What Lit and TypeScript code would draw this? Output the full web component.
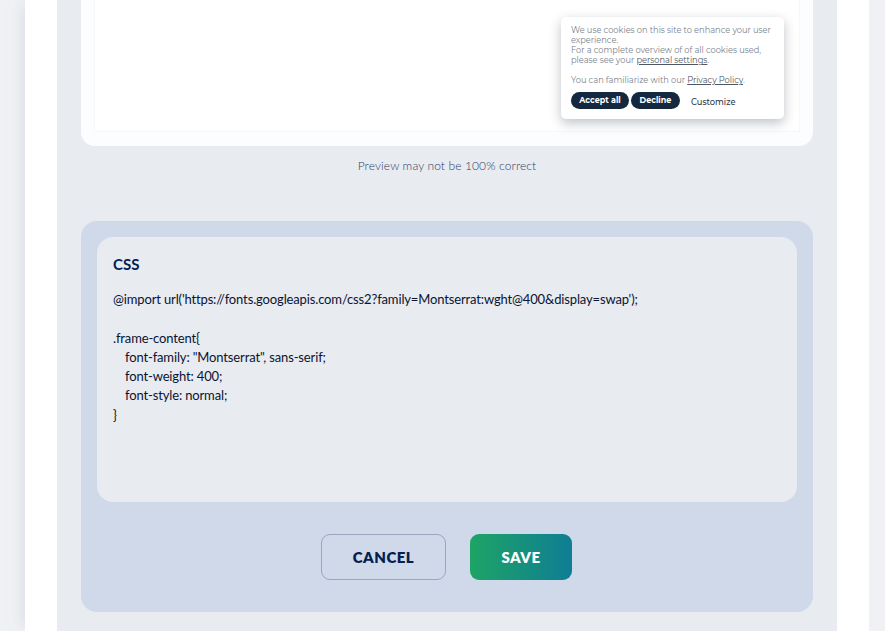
import { LitElement, html, css } from "lit";
import { customElement } from "lit/decorators.js";

@customElement("app-root")
export class AppRoot extends LitElement {
  static styles = css`
    :host { display: block; height: 631px; overflow: hidden; font-family: Lato, "Noto Sans", sans-serif; background: #eff1f4; }
    .page { height: 631px; margin: 0 16px 0 25px; padding: 0 32px; background: #fff; box-shadow: -8px 0 12px -6px rgba(200,206,214,.55); }
    .main { height: 631px; background: #e8ebf0; padding: 0 24px; display: flex; flex-direction: column; }
    .preview { height: 146px; flex: none; box-sizing: border-box; background: #fcfdfe; border-radius: 0 0 14px 14px; padding: 0 13px 14px; }
    .frame { position: relative; height: 132px; box-sizing: border-box; background: #fff; border: 1px solid #f6f7f9; border-top: 0; }
    .cookie { position: absolute; left: 466px; top: 17px; width: 223px; height: 102px; box-sizing: border-box; background: #fff; border-radius: 5px; padding: 8px 10px; box-shadow: 0 4px 12px rgba(40,50,70,.3); font-family: Montserrat, "Open Sans", sans-serif; font-size: 8.25px; line-height: 10px; color: #7b828c; }
    .cookie p { margin: 0 0 10px; white-space: nowrap; }
    .cookie a { color: #4d5663; text-decoration: underline; }
    .cbtns { display: flex; align-items: center; gap: 2px; margin-top: -3px; }
    .pill { height: 17px; line-height: 17px; border-radius: 9px; background: #14293f; color: #fff; font-weight: 700; font-size: 8px; text-align: center; }
    .accept { width: 58px; }
    .decline { width: 49px; }
    .custom { margin-left: 9px; color: #2e3a4a; font-weight: 500; font-size: 8.3px; line-height: 10px; padding-top: 2px; }
    .note { margin: 13px 0 0; height: 14px; line-height: 14px; text-align: center; font-size: 12px; font-weight: 300; letter-spacing: .12px; color: #2f3b68; }
    .panel { margin-top: 48px; height: 391px; flex: none; box-sizing: border-box; background: #cfd9e9; border-radius: 16px; padding: 16px; }
    .editor { height: 265px; box-sizing: border-box; background: #e8ebf0; border-radius: 16px; padding: 19px 16px; color: #0b1330; }
    .editor h3 { margin: 0 0 17.4px; font-size: 15px; line-height: 17px; font-weight: 700; color: #04204f; }
    .code { margin: 0; font-family: inherit; font-size: 13px; line-height: 19.2px; white-space: pre; letter-spacing: -.14px; }
    .ind { padding-left: 12px; }
    .actions { display: flex; justify-content: center; gap: 24px; margin-top: 32px; padding-right: 1px; }
    .btn { height: 46px; box-sizing: border-box; border-radius: 9px; display: flex; align-items: center; justify-content: center; font-size: 15px; font-weight: 800; letter-spacing: .5px; }
    .cancel { width: 125px; border: 1px solid #98a6be; color: #04204f; }
    .save { width: 102px; color: #fff; background: linear-gradient(90deg, #1ea465, #0f7d95); }
  `;

  render() {
    return html`<div class="page"><div class="main">
      <div class="preview"><div class="frame">
        <div class="cookie">
          <p>We use cookies on this site to enhance your user<br>experience.<br>For a complete overview of of all cookies used,<br>please see your <a>personal settings</a>.</p>
          <p>You can familiarize with our <a>Privacy Policy</a>.</p>
          <div class="cbtns"><div class="pill accept">Accept all</div><div class="pill decline">Decline</div><div class="custom">Customize</div></div>
        </div>
      </div></div>
      <p class="note">Preview may not be 100% correct</p>
      <div class="panel">
        <div class="editor">
          <h3>CSS</h3>
          <div class="code">@import url('https://fonts.googleapis.com/css2?family=Montserrat:wght@400&amp;display=swap');</div>
          <div class="code">&nbsp;</div>
          <div class="code">.frame-content{</div>
          <div class="code ind">font-family: "Montserrat", sans-serif;</div>
          <div class="code ind">font-weight: 400;</div>
          <div class="code ind">font-style: normal;</div>
          <div class="code">}</div>
        </div>
        <div class="actions"><div class="btn cancel">CANCEL</div><div class="btn save">SAVE</div></div>
      </div>
    </div></div>`;
  }
}
